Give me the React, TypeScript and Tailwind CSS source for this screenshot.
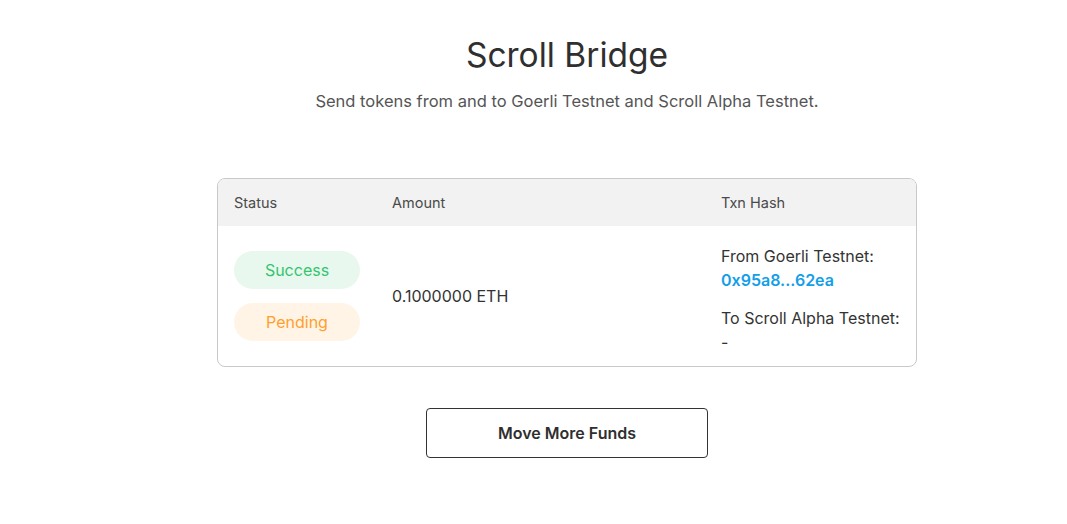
import React from "react";

export default function App() {
  return (
    <div
      className="min-h-[524px] w-full bg-white flex flex-col items-center pl-[67px]"
      style={{ fontFamily: "Inter, 'Noto Sans', sans-serif" }}
    >
      <h1 className="mt-[35px] text-[33.5px] leading-[40px] font-normal text-[#2f2f2f]">Scroll Bridge</h1>
      <p className="mt-[14px] text-[16.5px] leading-[24px] text-[#555555]">
        Send tokens from and to Goerli Testnet and Scroll Alpha Testnet.
      </p>
      <div className="mt-[65px] w-[700px] rounded-[8px] border border-[#c9c9c9] overflow-hidden">
        <div className="h-[47px] bg-[#f2f2f2] flex items-center text-[14.5px] text-[#4a4a4a]">
          <div className="w-[174px] pl-[16px]">Status</div>
          <div className="w-[329px]">Amount</div>
          <div>Txn Hash</div>
        </div>
        <div className="h-[140px] flex items-center text-[16px] text-[#333333]">
          <div className="w-[174px] pl-[16px] flex flex-col gap-[14px]">
            <div className="w-[126px] h-[38px] rounded-full bg-[#e8f8ee] text-[#35c46f] flex items-center justify-center">
              Success
            </div>
            <div className="w-[126px] h-[38px] rounded-full bg-[#fff4e6] text-[#ff9f2e] flex items-center justify-center">
              Pending
            </div>
          </div>
          <div className="w-[329px]">0.1000000 ETH</div>
          <div className="flex flex-col leading-[24px] pt-[6px]">
            <div>From Goerli Testnet:</div>
            <div className="text-[#139ee8] font-semibold">0x95a8...62ea</div>
            <div className="mt-[14px]">To Scroll Alpha Testnet:</div>
            <div>-</div>
          </div>
        </div>
      </div>
      <button className="mt-[41px] w-[282px] h-[50px] rounded-[4px] border border-[#333333] text-[16px] font-semibold text-[#2f2f2f] bg-white">
        Move More Funds
      </button>
    </div>
  );
}
